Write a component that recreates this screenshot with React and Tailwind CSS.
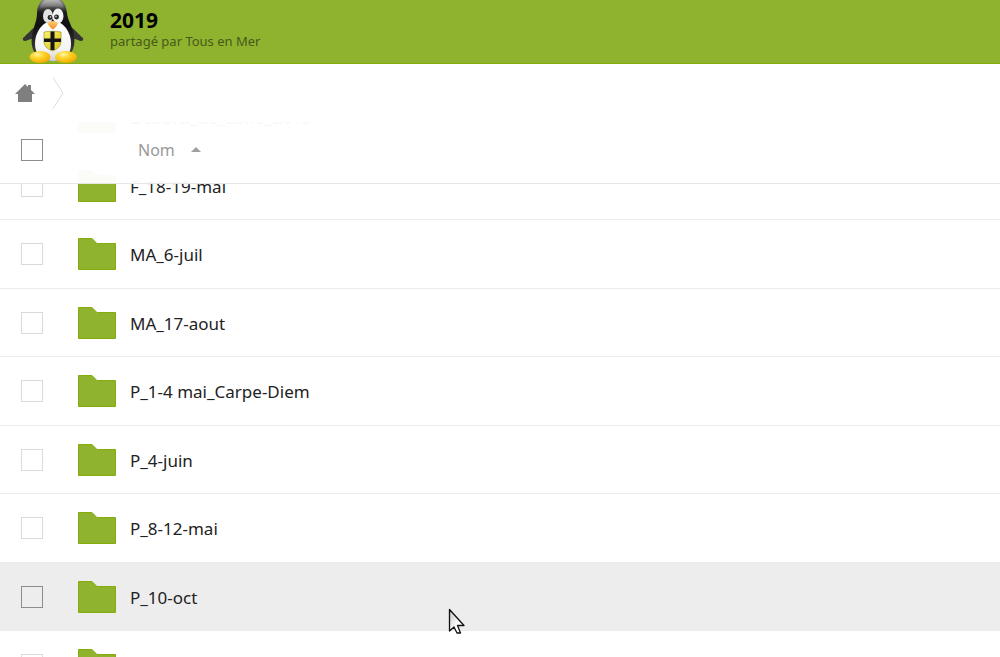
const rows = [
  { id: "debord", name: "Debord_de_Loire_2019" },
  { id: "f-18", name: "F_18-19-mai" },
  { id: "ma-6", name: "MA_6-juil" },
  { id: "ma-17", name: "MA_17-aout" },
  { id: "p-1", name: "P_1-4 mai_Carpe-Diem" },
  { id: "p-4", name: "P_4-juin" },
  { id: "p-8", name: "P_8-12-mai" },
  { id: "p-10", name: "P_10-oct", active: true },
  { id: "next", name: "" },
];

function Penguin() {
  return (
    <svg viewBox="0 0 66 63" className="h-[63px] w-[66px] shrink-0" aria-hidden="true">
      <defs>
        <linearGradient id="body" x1="0" y1="0" x2="0" y2="1">
          <stop offset="0" stopColor="#9a9a9a" />
          <stop offset="0.12" stopColor="#6a6a6a" />
          <stop offset="0.24" stopColor="#1c1c1c" />
          <stop offset="0.45" stopColor="#101010" />
          <stop offset="1" stopColor="#4a4a4a" />
        </linearGradient>
        <linearGradient id="belly" x1="0" y1="0" x2="0" y2="1">
          <stop offset="0" stopColor="#ffffff" />
          <stop offset="0.7" stopColor="#f4f4f4" />
          <stop offset="1" stopColor="#cfcfcf" />
        </linearGradient>
        <linearGradient id="shine" x1="0" y1="0" x2="0" y2="1">
          <stop offset="0" stopColor="#ffffff" stopOpacity="0.45" />
          <stop offset="1" stopColor="#ffffff" stopOpacity="0.05" />
        </linearGradient>
        <radialGradient id="foot" cx="0.38" cy="0.3" r="0.7">
          <stop offset="0" stopColor="#fff7a8" />
          <stop offset="0.4" stopColor="#ffd62e" />
          <stop offset="1" stopColor="#f3ab00" />
        </radialGradient>
        <linearGradient id="beak" x1="0" y1="0" x2="0" y2="1">
          <stop offset="0" stopColor="#ffd07a" />
          <stop offset="1" stopColor="#f08a20" />
        </linearGradient>
        <linearGradient id="shield" x1="0" y1="0" x2="1" y2="1">
          <stop offset="0" stopColor="#f9f26a" />
          <stop offset="1" stopColor="#d8c416" />
        </linearGradient>
      </defs>
      <path
        d="M17 26C11 29 8 34 3 38C2 41 5 42 8 40L17 37ZM49 26C55 29 58 34 63 38C64 41 61 42 58 40L49 37Z"
        fill="#343434"
      />
      <path
        d="M32 -3C22 -3 17 4 17 13C17 22 13 27 12 36C10 48 15 61 33 61C51 61 56 48 54 36C53 27 48 22 47 13C46 4 42 -3 32 -3Z"
        fill="url(#body)"
      />
      <path d="M32 -2C25 -2 20 3 20 9C26 6 38 6 44 9C43 3 39 -2 32 -2Z" fill="url(#shine)" />
      <path
        d="M24 24C18 29 15 36 15 44C15 55 23 61 33 61C44 61 51 55 51 44C51 36 48 29 42 24C38 21 28 21 24 24Z"
        fill="url(#belly)"
      />
      <ellipse cx="28" cy="16" rx="5" ry="7" fill="#e2e2e2" />
      <ellipse cx="38" cy="16" rx="5.500" ry="7.500" fill="#f4f4f4" />
      <circle cx="30" cy="17.500" r="2.400" fill="#222" />
      <circle cx="36.500" cy="17" r="2.400" fill="#222" />
      <circle cx="30.500" cy="17" r="0.900" fill="#bbb" />
      <circle cx="36" cy="16.500" r="0.900" fill="#bbb" />
      <path d="M27.500 23C29 20.500 36 20.500 38 23C37.500 25.500 35 28 33 29.500C31 28 28 25.500 27.500 23Z" fill="url(#beak)" />
      <path
        d="M24 32C30 31 35 31 41 32V41C41 46 38 49 32.500 51C27 49 24 46 24 41Z"
        fill="url(#shield)"
        stroke="#8b8526"
        strokeWidth="0.600"
      />
      <path d="M30.500 31.500H34.500V38.500H41V42H34.500V50H30.500V42H24V38.500H30.500Z" fill="#151515" />
      <ellipse cx="20" cy="57" rx="10.500" ry="6" fill="url(#foot)" />
      <ellipse cx="46" cy="57" rx="11" ry="6" fill="url(#foot)" />
    </svg>
  );
}

function Folder() {
  return (
    <svg viewBox="0 0 38 32" className="h-8 w-[38px]" aria-hidden="true">
      <path d="M0.500 0.500H14L19 5.500H37.500V31.500H0.500Z" fill="#8fb32f" stroke="#86ac0c" />
    </svg>
  );
}

function Box({ label, dark }) {
  return (
    <input
      type="checkbox"
      aria-label={label}
      className={
        "block size-[22px] appearance-none border " +
        (dark ? "border-[#8c8c8c]" : "border-[#dadada]")
      }
    />
  );
}

export default function App() {
  return (
    <div className="relative flex h-screen flex-col overflow-hidden bg-white font-['Noto_Sans',sans-serif]">
      <header className="flex h-16 shrink-0 border-b border-[#86ac0c] bg-[#8fb32f] pl-5">
        <Penguin />
        <div className="pt-2 pl-6">
          <h1 className="text-[21px] leading-6 font-bold text-black">2019</h1>
          <p className="text-[13px] leading-[18px] text-[#48591a]">partagé par Tous en Mer</p>
        </div>
      </header>

      <nav aria-label="Fil d'Ariane" className="flex h-[58px] shrink-0 items-center gap-4 pl-[15px]">
        <a href="#accueil" aria-label="Accueil">
          <svg viewBox="0 0 20 20" className="size-5" aria-hidden="true">
            <path d="M10 1L0 11H3V19H17V11H20L16 7V2H13V4Z" fill="#7f7f7f" />
          </svg>
        </a>
        <svg viewBox="0 0 14 32" className="h-8 w-3.5" fill="none" stroke="#dcdcdc" aria-hidden="true">
          <path d="M2 0.500L12 16L2 31.500" />
        </svg>
      </nav>

      <main className="min-h-0 flex-1 overflow-hidden">
        <table className="block w-full text-left">
          <thead className="relative z-10 block border-b border-[#e6e6e6] bg-white/96">
            <tr className="flex h-[61px] items-center pb-1.5">
              <th className="w-[78px] pl-[21px]">
                <Box label="Tout sélectionner" dark />
              </th>
              <th className="pl-[60px] font-normal">
                <button className="flex items-center gap-4 text-base text-[#999]">
                  Nom
                  <svg viewBox="0 0 10 5" className="h-[5px] w-2.5" aria-hidden="true">
                    <path d="M0 5L5 0L10 5Z" fill="#a0a0a0" />
                  </svg>
                </button>
              </th>
            </tr>
          </thead>
          <tbody className="-mt-[101px] block">
            {rows.map(({ id, name, active }) => (
              <tr
                key={id}
                className={
                  "flex h-[68px] items-center border-b border-[#ebebeb] odd:h-[69px] " +
                  (active ? "bg-[#ededed]" : "bg-white")
                }
              >
                <td className="w-[78px] pl-[21px]">
                  <Box label={name || "Dossier"} dark={active} />
                </td>
                <td>
                  <a
                    href="#dossier"
                    aria-label={name || "Dossier"}
                    className="flex items-center gap-3.5 text-[17px] text-[#222]"
                  >
                    <Folder />
                    <span className="pt-0.5">{name}</span>
                  </a>
                </td>
              </tr>
            ))}
          </tbody>
        </table>
      </main>

      <svg viewBox="0 0 18 28" className="absolute top-[608px] left-[448px] h-7 w-[18px]" aria-hidden="true">
        <defs>
          <linearGradient id="pointer" x1="0" y1="0" x2="1" y2="1">
            <stop offset="0" stopColor="#c4c4c4" />
            <stop offset="0.600" stopColor="#ffffff" />
          </linearGradient>
        </defs>
        <path
          d="M1.500 1.500V23L6 19L9 25H12.500L9.500 17.500H16Z"
          fill="url(#pointer)"
          stroke="#111"
          strokeWidth="1.300"
          strokeLinejoin="round"
        />
      </svg>
    </div>
  );
}
